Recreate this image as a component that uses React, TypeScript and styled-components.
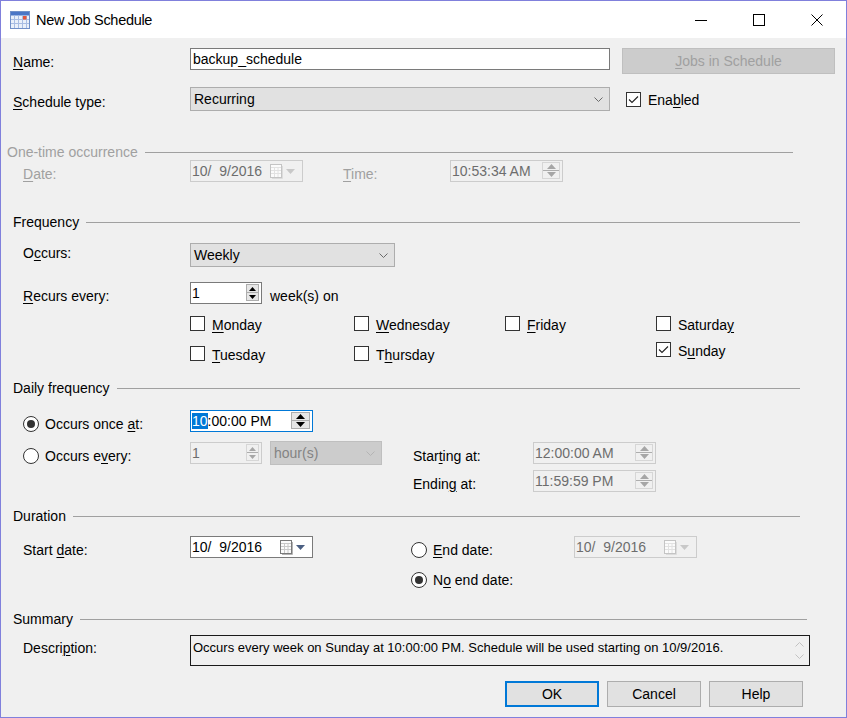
import React from 'react';
import styled, { createGlobalStyle } from 'styled-components';

const GlobalStyle = createGlobalStyle`
  html, body {
    margin: 0;
    padding: 0;
    background: #f0f0f0;
  }
  body {
    font-family: "Liberation Sans", Arial, sans-serif;
  }
`;

// little drawings
const Tri = ({ up, w = 7, color = '#000' }: { up?: boolean; w?: number; color?: string }) => {
    const h = Math.ceil(w / 2);
    return (
        <svg width={w} height={h} viewBox={`0 0 ${w} ${h}`}>
            <polygon points={up ? `0,${h} ${w},${h} ${w / 2},0` : `0,0 ${w},0 ${w / 2},${h}`} fill={color} />
        </svg>
    );
};

const Chevron = ({ color = '#6a6a6a', up }: { color?: string; up?: boolean }) => (
    <svg width="9" height="5" viewBox="0 0 9 5">
        <polyline points={up ? '0.5,4.5 4.5,0.5 8.5,4.5' : '0.5,0.5 4.5,4.5 8.5,0.5'} fill="none" stroke={color} strokeWidth="1" />
    </svg>
);

const CheckMark = () => (
    <svg width="13" height="13" viewBox="0 0 13 13">
        <polyline points="2,6.5 5,9.5 11,3.5" fill="none" stroke="#222" strokeWidth="1.1" />
    </svg>
);

const CalendarIcon = ({ disabled }: { disabled?: boolean }) => {
    const edge = disabled ? '#c4c4c4' : '#7a7a7a';
    const cell = disabled ? '#e2e2e2' : '#c9c9c9';
    return (
        <svg width="13" height="15" viewBox="0 0 13 15">
            <rect x="0.5" y="0.5" width="11" height="13" fill="#fbfbfb" stroke={edge} />
            <line x1="4.5" y1="3" x2="4.5" y2="13" stroke={cell} />
            <line x1="8" y1="3" x2="8" y2="13" stroke={cell} />
            <line x1="1" y1="3.5" x2="11" y2="3.5" stroke={cell} />
            <line x1="1" y1="6.5" x2="11" y2="6.5" stroke={cell} />
            <line x1="1" y1="9.5" x2="11" y2="9.5" stroke={cell} />
            <polyline points="12.5,2 12.5,14.5 2,14.5" fill="none" stroke={disabled ? '#dcdcdc' : '#b4b4b4'} />
        </svg>
    );
};

const AppIcon = () => (
    <svg width="20" height="18" viewBox="0 0 20 18">
        <rect x="0.5" y="0.5" width="19" height="17" fill="#e9f0fa" stroke="#7090c8" />
        <rect x="1" y="1" width="18" height="3.5" fill="#4a76c6" />
        <line x1="4.5" y1="4.5" x2="4.5" y2="17" stroke="#a8bde3" />
        <line x1="8.5" y1="4.5" x2="8.5" y2="17" stroke="#a8bde3" />
        <line x1="12.5" y1="4.5" x2="12.5" y2="17" stroke="#a8bde3" />
        <line x1="16.5" y1="4.5" x2="16.5" y2="17" stroke="#a8bde3" />
        <line x1="1" y1="8.5" x2="19" y2="8.5" stroke="#a8bde3" />
        <line x1="1" y1="12.5" x2="19" y2="12.5" stroke="#a8bde3" />
        <rect x="13" y="5" width="3.5" height="3.5" fill="#e4553a" />
    </svg>
);

// window frame
const Window = styled.div`
    width: 847px;
    height: 718px;
    box-sizing: border-box;
    border: 1px solid #8080dc;
    background: #f0f0f0;
    display: flex;
    flex-direction: column;
    font-family: "Liberation Sans", Arial, sans-serif;
    font-size: 14px;
    line-height: 16px;
    color: #000;
    position: relative;
    overflow: hidden;
`;

const TitleBar = styled.div`
    height: 37px;
    flex-shrink: 0;
    background: #fff;
    display: flex;
    align-items: center;
    padding-left: 9px;
`;

const TitleText = styled.span`
    margin-left: 6px;
    font-size: 14.5px;
    letter-spacing: -0.3px;
`;

const WinControls = styled.div`
    margin-left: auto;
    display: flex;
    height: 100%;
`;

const WinButton = styled.div`
    width: 58px;
    height: 100%;
    display: flex;
    align-items: center;
    justify-content: center;
`;

const Grip = styled.div`
    position: absolute;
    right: 1px;
    bottom: 1px;
    width: 6px;
    height: 6px;
`;

const Body = styled.div`
    display: flex;
    flex-direction: column;
    flex: 1;
`;

// rows and labels
const Row = styled.div<{ $mt: number; $h: number; $pl: number; $align?: string }>`
    display: flex;
    align-items: ${p => p.$align || 'center'};
    margin-top: ${p => p.$mt}px;
    height: ${p => p.$h}px;
    padding-left: ${p => p.$pl}px;
`;

const Label = styled.span<{ $w?: number; $ml?: number; $pt?: number; $disabled?: boolean }>`
    ${p => (p.$w ? `width: ${p.$w}px;` : '')}
    margin-left: ${p => p.$ml || 0}px;
    flex-shrink: 0;
    padding-top: ${p => (p.$pt ?? 5)}px;
    white-space: nowrap;
    color: ${p => (p.$disabled ? '#a0a0a0' : '#000')};
`;

const Key = styled.u`
    text-decoration: underline;
    text-decoration-thickness: 1px;
    text-underline-offset: 2px;
`;

const GroupHeader = styled.div<{ $mt: number; $pl: number; $pr: number; $disabled?: boolean }>`
    display: flex;
    align-items: center;
    height: 16px;
    margin-top: ${p => p.$mt}px;
    padding-left: ${p => p.$pl}px;
    padding-right: ${p => p.$pr}px;
    color: ${p => (p.$disabled ? '#a0a0a0' : '#000')};
    white-space: nowrap;

    &::after {
        content: '';
        flex: 1;
        height: 1px;
        margin-left: 7px;
        background: #a0a0a0;
    }
`;

// inputs
const TextBox = styled.div<{ $w: number }>`
    width: ${p => p.$w}px;
    height: 22px;
    box-sizing: border-box;
    border: 1px solid #7a7a7a;
    background: #fff;
    display: flex;
    align-items: center;
    padding-left: 2px;
`;

const SideButton = styled.div`
    width: 213px;
    height: 26px;
    margin-left: 12px;
    box-sizing: border-box;
    background: #cccccc;
    border: 1px solid #bfbfbf;
    color: #a0a0a0;
    display: flex;
    align-items: center;
    justify-content: center;
`;

const Combo = styled.div<{ $w: number; $disabled?: boolean }>`
    width: ${p => p.$w}px;
    height: 24px;
    box-sizing: border-box;
    border: 1px solid ${p => (p.$disabled ? '#bfbfbf' : '#adadad')};
    background: ${p => (p.$disabled ? '#cccccc' : '#e1e1e1')};
    color: ${p => (p.$disabled ? '#838383' : '#000')};
    display: flex;
    align-items: center;
    justify-content: space-between;
    padding: 0 6px 0 3px;
    flex-shrink: 0;
`;

const SpinBox = styled.div<{ $w: number; $disabled?: boolean; $focused?: boolean }>`
    width: ${p => p.$w}px;
    height: 22px;
    box-sizing: border-box;
    border: 1px solid ${p => (p.$focused ? '#0078d7' : p.$disabled ? '#cccccc' : '#7a7a7a')};
    background: ${p => (p.$disabled ? '#f0f0f0' : '#fff')};
    color: ${p => (p.$disabled ? '#6d6d6d' : '#000')};
    display: flex;
    align-items: center;
    padding-left: 1px;
    flex-shrink: 0;
`;

const SpinValue = styled.span`
    flex: 1;
    white-space: nowrap;
`;

const Selected = styled.span`
    background: #0078d7;
    color: #fff;
`;

const SpinButtons = styled.div<{ $w: number; $disabled?: boolean }>`
    width: ${p => p.$w}px;
    align-self: stretch;
    margin: 1px 2px 2px 0;
    box-sizing: border-box;
    border: 1px solid ${p => (p.$disabled ? '#d6d6d6' : '#adadad')};
    background: ${p => (p.$disabled ? '#f0f0f0' : '#e6e6e6')};
    display: flex;
    flex-direction: column;
`;

const SpinHalf = styled.div<{ $disabled?: boolean }>`
    flex: 1;
    display: flex;
    align-items: center;
    justify-content: center;

    & + & {
        border-top: 1px solid ${p => (p.$disabled ? '#d6d6d6' : '#adadad')};
    }
`;

const DateBox = styled.div<{ $w: number; $disabled?: boolean }>`
    width: ${p => p.$w}px;
    height: 22px;
    box-sizing: border-box;
    border: 1px solid ${p => (p.$disabled ? '#cccccc' : '#7a7a7a')};
    background: ${p => (p.$disabled ? '#f0f0f0' : '#fff')};
    color: ${p => (p.$disabled ? '#6d6d6d' : '#000')};
    display: flex;
    align-items: center;
    gap: 3px;
    padding: 0 7px 0 1px;
    flex-shrink: 0;
`;

const DateText = styled.span`
    flex: 1;
    white-space: nowrap;
`;

// check boxes and radios
const CheckItem = styled.div<{ $ml?: number }>`
    display: flex;
    align-items: center;
    gap: 7px;
    height: 15px;
    margin-left: ${p => p.$ml || 0}px;
    white-space: nowrap;
`;

const CheckBox = styled.span`
    width: 15px;
    height: 15px;
    box-sizing: border-box;
    border: 1px solid #333;
    background: #fff;
    display: inline-flex;
    align-items: center;
    justify-content: center;
    flex-shrink: 0;
`;

const CheckText = styled.span`
    padding-top: 2px;
`;

const RadioItem = styled.div`
    display: flex;
    align-items: center;
    gap: 6px;
    padding-top: 5px;
    white-space: nowrap;
`;

const Radio = styled.span<{ $checked?: boolean }>`
    width: 16px;
    height: 16px;
    box-sizing: border-box;
    border: 1px solid #333;
    border-radius: 50%;
    background: #fff;
    display: inline-flex;
    align-items: center;
    justify-content: center;
    flex-shrink: 0;

    &::after {
        content: '';
        display: ${p => (p.$checked ? 'block' : 'none')};
        width: 8px;
        height: 8px;
        border-radius: 50%;
        background: #333;
    }
`;

// grids
const DaysGrid = styled.div`
    display: grid;
    grid-template-columns: 164px 151px 151px 1fr;
    margin-top: 12px;
    padding-left: 189px;
`;

const DayColumn = styled.div<{ $gap: number }>`
    display: flex;
    flex-direction: column;
    gap: ${p => p.$gap}px;
`;

const DailyGrid = styled.div`
    display: grid;
    grid-template-columns: 167px 80px 143px 120px 123px;
    grid-template-rows: 32px 28px 22px;
    align-items: start;
    margin-top: 14px;
    padding-left: 22px;
`;

const DurationGrid = styled.div`
    display: grid;
    grid-template-columns: 167px 221px 163px 123px;
    grid-template-rows: 22px 22px;
    row-gap: 8px;
    margin-top: 12px;
    padding-left: 22px;
`;

const Cell = styled.div<{ $col: string; $row: number }>`
    grid-column: ${p => p.$col};
    grid-row: ${p => p.$row};
    height: 22px;
    display: flex;
    align-items: center;
`;

// summary and buttons
const DescBox = styled.div`
    width: 620px;
    height: 31px;
    box-sizing: border-box;
    border: 1px solid #1a1a1a;
    background: #f0f0f0;
    display: flex;
`;

const DescText = styled.div`
    flex: 1;
    padding: 4px 2px;
    font-size: 13px;
    white-space: nowrap;
`;

const DescScroll = styled.div`
    width: 20px;
    display: flex;
    flex-direction: column;
    align-items: center;
    justify-content: space-around;
    padding: 3px 0;
`;

const ButtonRow = styled.div`
    display: flex;
    justify-content: flex-end;
    gap: 8px;
    margin-top: 15px;
    padding-right: 43px;
`;

const DialogButton = styled.div<{ $primary?: boolean }>`
    width: 94px;
    height: 26px;
    box-sizing: border-box;
    background: #e1e1e1;
    border: ${p => (p.$primary ? '2px solid #0078d7' : '1px solid #adadad')};
    display: flex;
    align-items: center;
    justify-content: center;
`;

// composed parts
const Spin = ({ value, w, btnW = 13, disabled, focused, selected }: {
    value: string; w: number; btnW?: number; disabled?: boolean; focused?: boolean; selected?: string;
}) => {
    const tri = disabled ? '#a6a6a6' : '#000';
    const tw = btnW > 15 ? 9 : 7;
    return (
        <SpinBox $w={w} $disabled={disabled} $focused={focused}>
            <SpinValue>{selected && <Selected>{selected}</Selected>}{value}</SpinValue>
            <SpinButtons $w={btnW} $disabled={disabled}>
                <SpinHalf $disabled={disabled}><Tri up w={tw} color={tri} /></SpinHalf>
                <SpinHalf $disabled={disabled}><Tri w={tw} color={tri} /></SpinHalf>
            </SpinButtons>
        </SpinBox>
    );
};

const DatePick = ({ w, disabled }: { w: number; disabled?: boolean }) => (
    <DateBox $w={w} $disabled={disabled}>
        <DateText>{'10/\u20079/2016'}</DateText>
        <CalendarIcon disabled={disabled} />
        <Tri w={9} color={disabled ? '#c8c8c8' : '#4b5f82'} />
    </DateBox>
);

const Day = ({ children, checked }: { children: React.ReactNode; checked?: boolean }) => (
    <CheckItem>
        <CheckBox>{checked && <CheckMark />}</CheckBox>
        <CheckText>{children}</CheckText>
    </CheckItem>
);

const Choice = ({ children, checked }: { children: React.ReactNode; checked?: boolean }) => (
    <RadioItem>
        <Radio $checked={checked} />
        <span>{children}</span>
    </RadioItem>
);

export default function App() {
    return (
        <>
            <GlobalStyle />
            <Window>
                <TitleBar>
                    <AppIcon />
                    <TitleText>New Job Schedule</TitleText>
                    <WinControls>
                        <WinButton>
                            <svg width="12" height="12" viewBox="0 0 12 12"><line x1="0" y1="6.5" x2="12" y2="6.5" stroke="#000" /></svg>
                        </WinButton>
                        <WinButton>
                            <svg width="12" height="12" viewBox="0 0 12 12"><rect x="0.5" y="0.5" width="11" height="11" fill="none" stroke="#000" /></svg>
                        </WinButton>
                        <WinButton>
                            <svg width="12" height="12" viewBox="0 0 12 12">
                                <line x1="0.5" y1="0.5" x2="11.5" y2="11.5" stroke="#000" />
                                <line x1="11.5" y1="0.5" x2="0.5" y2="11.5" stroke="#000" />
                            </svg>
                        </WinButton>
                    </WinControls>
                </TitleBar>

                <Body>
                    <Row $mt={10} $h={26} $pl={12} $align="flex-start">
                        <Label $w={177} $pt={6}><Key>N</Key>ame:</Label>
                        <TextBox $w={420}>backup_schedule</TextBox>
                        <SideButton><span><Key>J</Key>obs in Schedule</span></SideButton>
                    </Row>

                    <Row $mt={13} $h={24} $pl={12}>
                        <Label $w={177}><Key>S</Key>chedule type:</Label>
                        <Combo $w={420}>Recurring<Chevron /></Combo>
                        <CheckItem $ml={16}>
                            <CheckBox><CheckMark /></CheckBox>
                            <CheckText>Ena<Key>b</Key>led</CheckText>
                        </CheckItem>
                    </Row>

                    <GroupHeader $mt={33} $pl={6} $pr={53} $disabled>One-time occurrence</GroupHeader>
                    <Row $mt={0} $h={22} $pl={22}>
                        <Label $w={167} $disabled><Key>D</Key>ate:</Label>
                        <DatePick w={113} disabled />
                        <Label $w={107} $ml={40} $disabled><Key>T</Key>ime:</Label>
                        <Spin value="10:53:34 AM" w={113} btnW={18} disabled />
                    </Row>

                    <GroupHeader $mt={32} $pl={12} $pr={46}>Frequency</GroupHeader>
                    <Row $mt={13} $h={24} $pl={22} $align="flex-start">
                        <Label $w={167} $pt={2}>O<Key>c</Key>curs:</Label>
                        <Combo $w={205}>Weekly<Chevron /></Combo>
                    </Row>
                    <Row $mt={15} $h={22} $pl={22}>
                        <Label $w={167}><Key>R</Key>ecurs every:</Label>
                        <Spin value="1" w={72} />
                        <Label $ml={8}>week(s) on</Label>
                    </Row>
                    <DaysGrid>
                        <DayColumn $gap={15}>
                            <Day><Key>M</Key>onday</Day>
                            <Day><Key>T</Key>uesday</Day>
                        </DayColumn>
                        <DayColumn $gap={15}>
                            <Day><Key>W</Key>ednesday</Day>
                            <Day>T<Key>h</Key>ursday</Day>
                        </DayColumn>
                        <DayColumn $gap={15}>
                            <Day><Key>F</Key>riday</Day>
                        </DayColumn>
                        <DayColumn $gap={11}>
                            <Day>Saturda<Key>y</Key></Day>
                            <Day checked>S<Key>u</Key>nday</Day>
                        </DayColumn>
                    </DaysGrid>

                    <GroupHeader $mt={19} $pl={12} $pr={46}>Daily frequency</GroupHeader>
                    <DailyGrid>
                        <Cell $col="1" $row={1}>
                            <Choice checked>Occurs once <Key>a</Key>t:</Choice>
                        </Cell>
                        <Cell $col="2 / span 2" $row={1}>
                            <Spin value=":00:00 PM" selected="10" w={123} btnW={19} focused />
                        </Cell>
                        <Cell $col="1" $row={2}>
                            <Choice>Occurs e<Key>v</Key>ery:</Choice>
                        </Cell>
                        <Cell $col="2" $row={2}>
                            <Spin value="1" w={72} disabled />
                        </Cell>
                        <Cell $col="3" $row={2}>
                            <Combo $w={112} $disabled>hour(s)<Chevron color="#b4b4b4" /></Combo>
                        </Cell>
                        <Cell $col="4" $row={2}>
                            <Label>Star<Key>t</Key>ing at:</Label>
                        </Cell>
                        <Cell $col="5" $row={2}>
                            <Spin value="12:00:00 AM" w={123} btnW={18} disabled />
                        </Cell>
                        <Cell $col="4" $row={3}>
                            <Label>Endin<Key>g</Key> at:</Label>
                        </Cell>
                        <Cell $col="5" $row={3}>
                            <Spin value="11:59:59 PM" w={123} btnW={18} disabled />
                        </Cell>
                    </DailyGrid>

                    <GroupHeader $mt={16} $pl={12} $pr={46}>Duration</GroupHeader>
                    <DurationGrid>
                        <Cell $col="1" $row={1}>
                            <Label>Start <Key>d</Key>ate:</Label>
                        </Cell>
                        <Cell $col="2" $row={1}>
                            <DatePick w={123} />
                        </Cell>
                        <Cell $col="3" $row={1}>
                            <Choice><Key>E</Key>nd date:</Choice>
                        </Cell>
                        <Cell $col="4" $row={1}>
                            <DatePick w={123} disabled />
                        </Cell>
                        <Cell $col="3" $row={2}>
                            <Choice checked>N<Key>o</Key> end date:</Choice>
                        </Cell>
                    </DurationGrid>

                    <GroupHeader $mt={23} $pl={12} $pr={39}>Summary</GroupHeader>
                    <Row $mt={8} $h={31} $pl={22} $align="flex-start">
                        <Label $w={167}>Descri<Key>p</Key>tion:</Label>
                        <DescBox>
                            <DescText>Occurs every week on Sunday at 10:00:00 PM. Schedule will be used starting on 10/9/2016.</DescText>
                            <DescScroll>
                                <Chevron up color="#c2c2c2" />
                                <Chevron color="#c2c2c2" />
                            </DescScroll>
                        </DescBox>
                    </Row>

                    <ButtonRow>
                        <DialogButton $primary>OK</DialogButton>
                        <DialogButton>Cancel</DialogButton>
                        <DialogButton>Help</DialogButton>
                    </ButtonRow>
                </Body>

                <Grip>
                    <svg width="6" height="6" viewBox="0 0 6 6">
                        <rect x="4" y="0" width="2" height="2" fill="#b8b8b8" />
                        <rect x="2" y="2" width="2" height="2" fill="#b8b8b8" />
                        <rect x="4" y="2" width="2" height="2" fill="#b8b8b8" />
                        <rect x="0" y="4" width="2" height="2" fill="#b8b8b8" />
                        <rect x="2" y="4" width="2" height="2" fill="#b8b8b8" />
                        <rect x="4" y="4" width="2" height="2" fill="#b8b8b8" />
                    </svg>
                </Grip>
            </Window>
        </>
    );
}
